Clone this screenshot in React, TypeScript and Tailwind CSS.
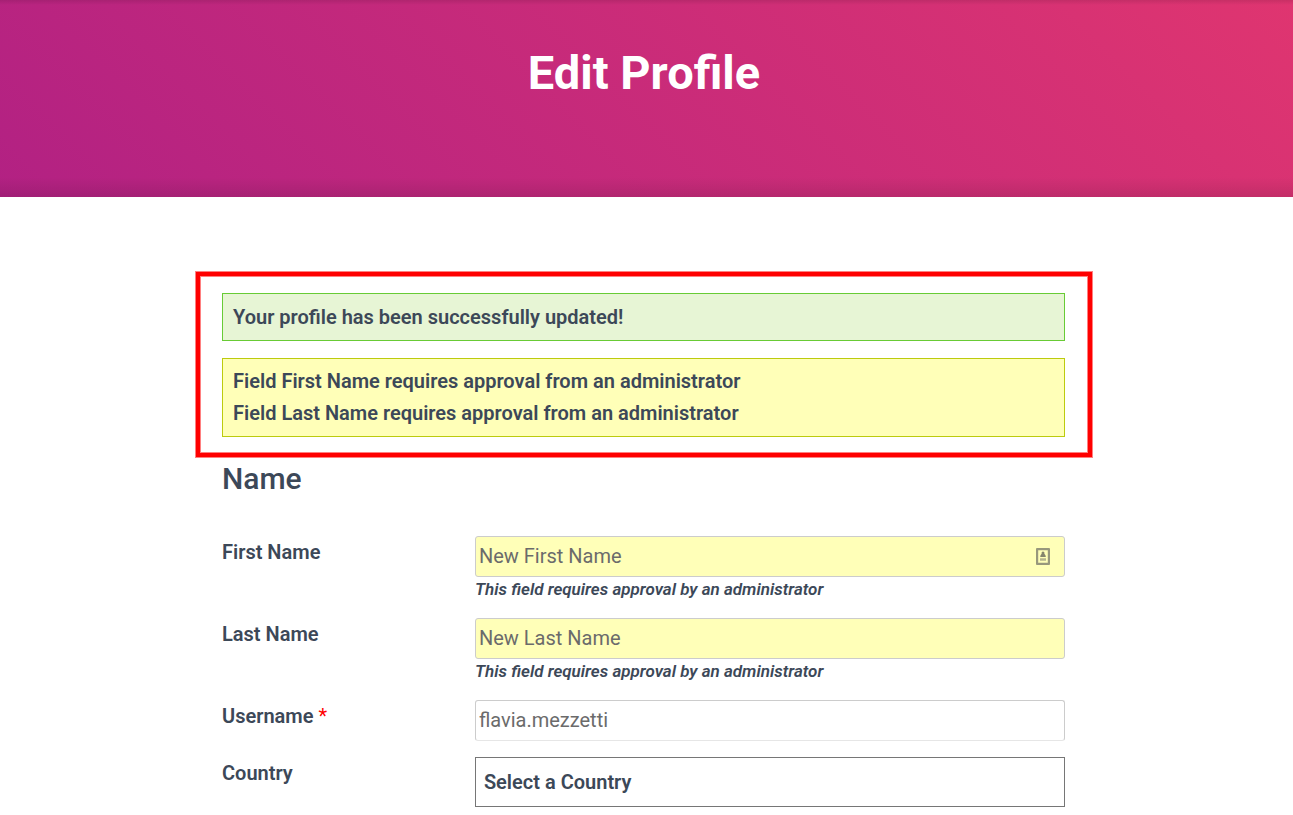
import type { ReactNode } from 'react'

interface FieldRowProps {
  id: string
  label: string
  required?: boolean
  needsApproval?: boolean
  children: ReactNode
}

const inputClass =
  'block h-[41px] w-full rounded-[3px] border border-[#cccccc] px-[3px] pb-0.5 text-xl text-[#6b6b6b] focus:outline-none focus:ring-1 focus:ring-[#c42a7b]'

function FieldRow({ id, label, required, needsApproval, children }: FieldRowProps) {
  return (
    <div className="grid grid-cols-[3fr_7fr]">
      <label htmlFor={id} className="text-xl leading-8 font-semibold">
        {label}
        {required && <span className="font-normal text-[#ff0000]"> *</span>}
      </label>
      <div>
        {children}
        {needsApproval && (
          <p id={`${id}-help`} className="pb-px text-[17px] leading-6 font-semibold italic">
            This field requires approval by an administrator
          </p>
        )}
      </div>
    </div>
  )
}

function AutofillIcon() {
  return (
    <svg width="14" height="17" viewBox="0 0 14 17" fill="none" aria-hidden="true">
      <rect x="1" y="1" width="12" height="15" rx="1" stroke="#98987c" strokeWidth="2.4" />
      <circle cx="7" cy="5" r="1.5" fill="#85856c" />
      <path d="M7 5.5c1.5 0 2.8 1.3 2.8 3.5H4.2C4.2 6.800 5.500 5.500 7 5.500Z" fill="#85856c" />
      <path d="M4 11.500h6" stroke="#b5b58e" strokeWidth="2.500" />
    </svg>
  )
}

export default function App() {
  return (
    <div className="min-h-screen bg-white font-['Roboto','Liberation_Sans',sans-serif] text-[#3c4858]">
      <header className="bg-[linear-gradient(to_top,rgba(0,0,0,0.1),transparent_20px),linear-gradient(to_bottom,rgba(0,0,0,0.1),transparent_5px),linear-gradient(45deg,#b22183_0%,#df3570_100%)]">
        <h1 className="pt-[45px] pr-[5px] pb-24 text-center text-[47px] leading-14 font-bold text-white">
          Edit Profile
        </h1>
      </header>

      <main className="pt-[75px] pr-[5px] pb-2">
        <div className="mx-auto max-w-4xl">
          {/* Notices */}
          <div className="space-y-[17px] border-4 border-[#ff0000] pt-[17px] pr-[23px] pb-4 pl-[22px] text-xl leading-8 font-semibold shadow-[0_0_0_1px_#ff8080,inset_0_0_0_1px_#ff8080]">
            <div role="status" className="border border-[#68cb35] bg-[#e7f5d5] px-2.5 py-[7px]">
              Your profile has been successfully updated!
            </div>
            <div role="status" className="border border-[#bccb0e] bg-[#ffffb8] px-2.5 pt-1.5 pb-[7px]">
              <p>Field First Name requires approval from an administrator</p>
              <p>Field Last Name requires approval from an administrator</p>
            </div>
          </div>

          <form className="pr-[27px] pl-[26px]" onSubmit={(e) => e.preventDefault()}>
            <h2 className="pt-1 pb-[39px] text-3xl leading-9 font-medium">Name</h2>

            <div className="space-y-4">
              <FieldRow id="first_name" label="First Name" needsApproval>
                <div className="relative">
                  <input
                    id="first_name"
                    type="text"
                    defaultValue="New First Name"
                    aria-describedby="first_name-help"
                    className={`${inputClass} bg-[#ffffb8]`}
                  />
                  <span className="pointer-events-none absolute inset-y-0 right-[15px] flex items-center">
                    <AutofillIcon />
                  </span>
                </div>
              </FieldRow>

              <FieldRow id="last_name" label="Last Name" needsApproval>
                <input
                  id="last_name"
                  type="text"
                  defaultValue="New Last Name"
                  aria-describedby="last_name-help"
                  className={`${inputClass} bg-[#ffffb8]`}
                />
              </FieldRow>

              <FieldRow id="username" label="Username" required>
                <input
                  id="username"
                  type="text"
                  defaultValue="flavia.mezzetti"
                  required
                  className={`${inputClass} border-b-[#e6e6e6] bg-white`}
                />
              </FieldRow>

              <FieldRow id="country" label="Country">
                <select
                  id="country"
                  defaultValue=""
                  className="block h-[50px] w-full appearance-none border border-[#767676] bg-white px-2 text-xl font-semibold"
                >
                  <option value="">Select a Country</option>
                </select>
              </FieldRow>
            </div>
          </form>
        </div>
      </main>
    </div>
  )
}
